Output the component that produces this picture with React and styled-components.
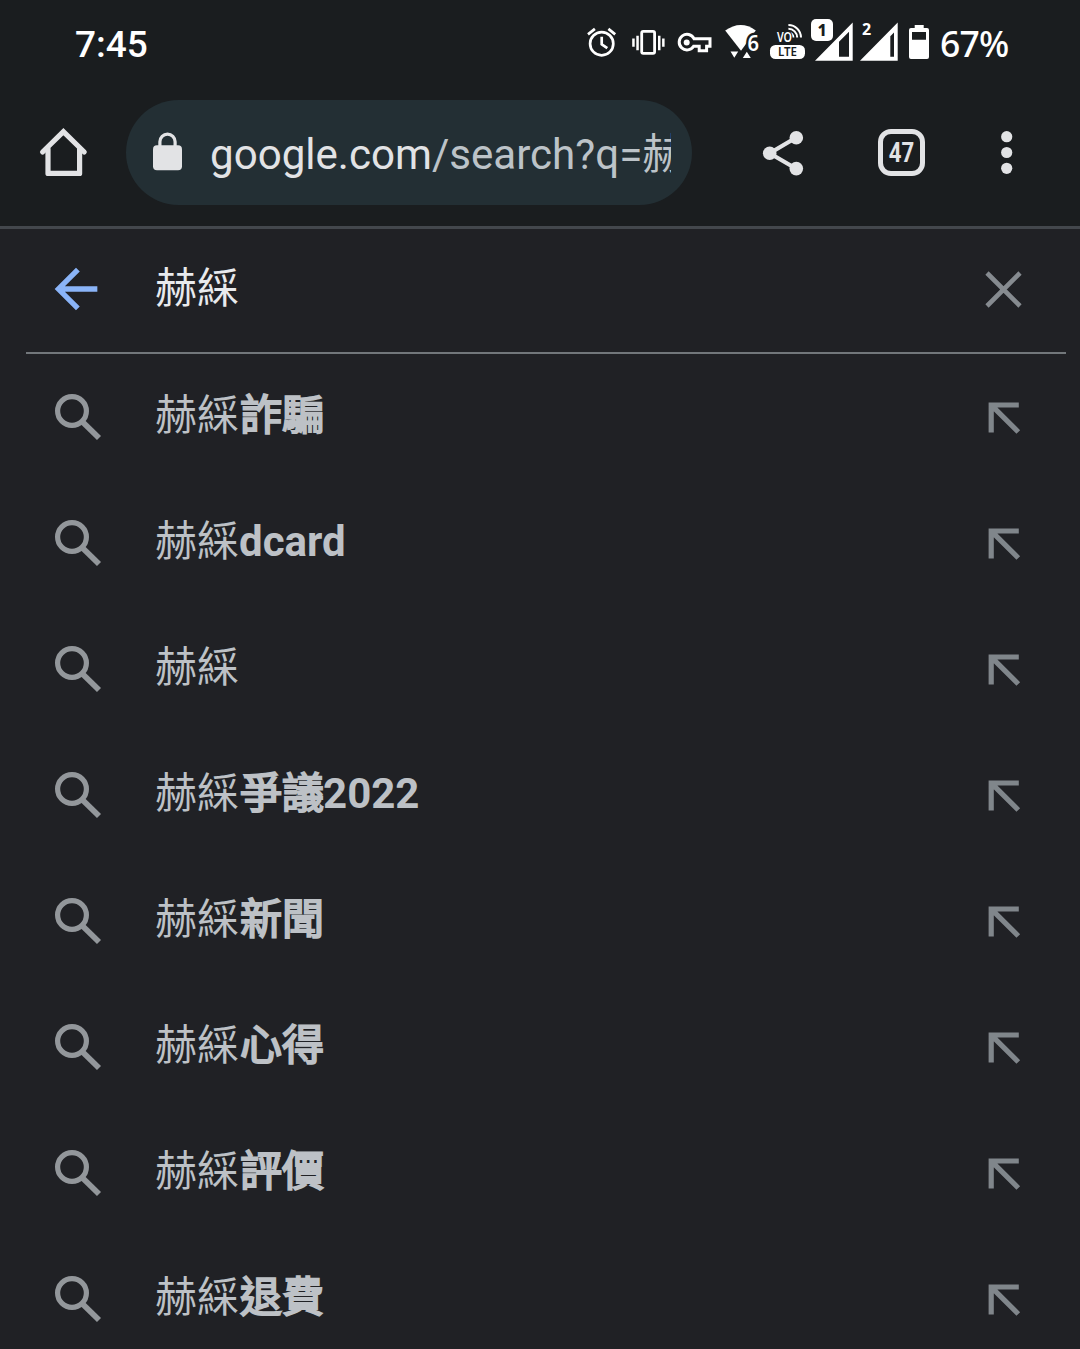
import styled, { createGlobalStyle } from 'styled-components';

const GlobalStyle = createGlobalStyle`
    * {
        box-sizing: border-box;
    }

    body {
        margin: 0;
        background: #202125;
        font-family: Roboto, 'Noto Sans CJK TC', sans-serif;
    }
`;

const Screen = styled.div`
    width: 1080px;
    height: 1349px;
    overflow: hidden;
    display: flex;
    flex-direction: column;
    background: #202125;
`;

const Header = styled.header`
    height: 229px;
    flex-shrink: 0;
    background: #1a1d1f;
    border-bottom: 3px solid #43474c;
`;

const StatusBar = styled.div`
    height: 80px;
    padding: 18px 69px 0 75px;
    display: flex;
    align-items: flex-start;
    color: #fff;
`;

const Clock = styled.div`
    margin-right: auto;
    font-size: 37px;
    font-weight: 500;
    line-height: 53px;
`;

const Battery = styled.div`
    width: 71px;
    margin-left: 11px;
    font-family: 'Noto Sans', sans-serif;
    font-size: 35.5px;
    font-weight: 500;
    line-height: 51px;
    letter-spacing: -0.8px;
`;

const StatusIcon = styled.svg`
    display: block;
    flex-shrink: 0;
    height: 44px;
    width: ${({$width}) => $width}px;
    margin-left: ${({$gap}) => $gap ?? 0}px;
    overflow: visible;
    font-family: 'Noto Sans', sans-serif;
`;

const Toolbar = styled.div`
    height: 146px;
    padding: 20px 45px 21px 36px;
    display: flex;
    align-items: center;
    color: #e2e3e5;
`;

const Icon = styled.svg`
    display: block;
    flex-shrink: 0;
    width: ${({$size}) => $size}px;
    height: ${({$size}) => $size}px;
`;

const AddressBar = styled.div`
    width: 566px;
    height: 105px;
    flex-shrink: 0;
    margin: 0 63px 0 35px;
    padding: 0 21px 0 20px;
    display: flex;
    align-items: center;
    border-radius: 53px;
    background: #232f34;
`;

const Url = styled.div`
    flex: 1;
    margin: 5px 0 0 20px;
    overflow: hidden;
    white-space: nowrap;
    font-size: 42.1px;
    line-height: 60px;
    color: #e2e3e5;

    span {
        color: #bcc3c8;
    }
`;

const TabCount = styled.div`
    width: 47px;
    height: 47px;
    flex-shrink: 0;
    margin: 0 54px 0 67px;
    display: flex;
    align-items: center;
    justify-content: center;
    border: 5px solid #e2e3e5;
    border-radius: 13px;
    font-size: 27px;
    font-weight: 700;

    span {
        transform: scaleX(0.82);
    }
`;

const SearchBox = styled.div`
    height: 125px;
    flex-shrink: 0;
    margin: 0 14px 0 26px;
    padding: 0 31px 3px 18px;
    display: flex;
    align-items: center;
    border-bottom: 2px solid #72777b;
`;

const Query = styled.div`
    flex: 1;
    margin: 0 0 1px 47px;
    font-size: 42px;
    line-height: 60px;
    color: #e8eaed;
`;

const Suggestions = styled.ul`
    margin: 0;
    padding: 0;
    list-style: none;
`;

const Suggestion = styled.li`
    height: 126px;
    padding: 0 56px 0 52px;
    display: flex;
    align-items: center;
`;

const Label = styled.div`
    flex: 1;
    margin: 0 0 2px 51px;
    font-size: 42px;
    line-height: 60px;
    color: #bdc1c6;
`;

const Bold = styled.b`
    font-weight: 700;
`;

// Han glyphs are thickened from the regular weight
const HanBold = styled.b`
    margin: 0 -1px 0 1px;
    font-weight: 400;
    -webkit-text-stroke: 2px currentColor;
`;

const suggestions = [
    {han: '詐騙'},
    {latin: 'dcard'},
    {},
    {han: '爭議', latin: '2022'},
    {han: '新聞'},
    {han: '心得'},
    {han: '評價'},
    {han: '退費'},
];

const StatusIcons = () => (
    <>
        <StatusIcon $width={31} fill="none" stroke="currentColor" strokeWidth="2.7">
            <circle cx="15.7" cy="25.7" r="11.6" />
            <path d="M15.7 18.8V26.4L21.3 30.2M2 16.4L8.9 10.9M22.4 10.9L29.2 16.4" />
        </StatusIcon>
        <StatusIcon $width={35} $gap={14} fill="currentColor">
            <rect x="10.7" y="13.4" width="12.9" height="22" rx="1.6" fill="none" stroke="currentColor" strokeWidth="2.8" />
            <path d="M5.3 17.7h2.5v14.6h-2.5zM1.2 20.4h2.5v8.4h-2.5zM27 17.7h2.5v14.6h-2.5zM31.1 20.4h2.5v8.4h-2.5z" />
        </StatusIcon>
        <StatusIcon $width={35} $gap={11} fill="none" stroke="currentColor" strokeWidth="3">
            <path d="M17 20.7H33V28.3H29.6V32.8H22.2V28.3H16.6A7.8 7.8 0 1 1 17 20.7Z" />
            <circle cx="9.7" cy="24.4" r="3" fill="currentColor" stroke="none" />
        </StatusIcon>
        <StatusIcon $width={36} $gap={12} fill="currentColor">
            <path d="M1.2 12.6Q16.5 1.5 31.8 12.4L17 32.7Z" />
            <path d="M6.5 33.5H14.2L10.3 39.8ZM18.8 40H26.8L22.8 33.7Z" />
            <text x="23.4" y="32.6" fontSize="21.5" fontWeight="600" stroke="#1a1d1f" strokeWidth="5" paintOrder="stroke" textLength="11.5" lengthAdjust="spacingAndGlyphs">6</text>
        </StatusIcon>
        <StatusIcon $width={36} $gap={10} fill="currentColor">
            <path d="M18.4 14.6A5 5 0 0 1 23.4 19.6M18.4 10.8A8.8 8.8 0 0 1 27.2 19.6M18.4 7A12.6 12.6 0 0 1 31 19.6" fill="none" stroke="currentColor" strokeWidth="2" />
            <text x="7" y="23.9" fontSize="13.5" fontWeight="600" stroke="#1a1d1f" strokeWidth="2.4" paintOrder="stroke" textLength="15" lengthAdjust="spacingAndGlyphs">VO</text>
            <rect x="0" y="27" width="35" height="14" rx="5.5" />
            <text x="8" y="38.2" fontSize="12" fontWeight="600" fill="#1a1d1f" textLength="19" lengthAdjust="spacingAndGlyphs">LTE</text>
        </StatusIcon>
        <StatusIcon $width={42} $gap={5} fill="currentColor">
            <path fillRule="evenodd" d="M4 42.7L41.7 4.5V42.7ZM28 23.8V38.7H38V13.8Z" />
            <rect x="0" y="1" width="22" height="22" rx="5" />
            <text x="11" y="17.8" textAnchor="middle" fontSize="16" fontWeight="800" fill="#1a1d1f">1</text>
        </StatusIcon>
        <StatusIcon $width={38} $gap={7} fill="currentColor">
            <path fillRule="evenodd" d="M0 42.7L37.7 4.5V42.7ZM30.3 18.3V38.7H34V14.5Z" />
            <text x="2" y="17.2" fontSize="16" fontWeight="700">2</text>
        </StatusIcon>
        <StatusIcon $width={20} $gap={11} fill="currentColor">
            <path fillRule="evenodd" d="M5.7 7h9v3H18a2 2 0 0 1 2 2V39a2 2 0 0 1-2 2H2a2 2 0 0 1-2-2V12a2 2 0 0 1 2-2H5.7ZM3 14V21.7H17V14Z" />
        </StatusIcon>
    </>
);

const HomeIcon = () => (
    <Icon $size={55} viewBox="0 0 55 55" fill="none" stroke="currentColor" strokeWidth="5.2" strokeLinecap="round" strokeLinejoin="round">
        <path d="M6.6 27L27.4 6.6L48.2 27" strokeLinejoin="miter" />
        <path d="M12 24V48.4H43.6V24" />
    </Icon>
);

const LockIcon = () => (
    <Icon $size={44} viewBox="0 0 44 44">
        <rect x="7" y="14.3" width="29" height="25" rx="4" fill="currentColor" />
        <path d="M13.9 16V10.8a7.6 7.6 0 0 1 15.2 0V16" fill="none" stroke="currentColor" strokeWidth="3.2" />
    </Icon>
);

const ShareIcon = () => (
    <Icon $size={56} viewBox="0 0 56 56" fill="currentColor">
        <path d="M41.3 12.5L14.7 28.3L41.3 43.7" fill="none" stroke="currentColor" strokeWidth="4.2" />
        <circle cx="14.7" cy="28.3" r="6.8" />
        <circle cx="41.3" cy="12.7" r="6.8" />
        <circle cx="41.3" cy="43.6" r="6.8" />
    </Icon>
);

const MenuIcon = () => (
    <Icon $size={56} viewBox="0 0 56 56" fill="currentColor">
        <circle cx="27.7" cy="11.7" r="5.6" />
        <circle cx="27.7" cy="27.5" r="5.6" />
        <circle cx="27.7" cy="43.3" r="5.6" />
    </Icon>
);

const BackIcon = () => (
    <Icon $size={64} viewBox="0 0 24 24" fill="#8ab4f8">
        <path d="M20 11H7.83l5.59-5.59L12 4l-8 8 8 8 1.41-1.41L7.83 13H20v-2z" />
    </Icon>
);

const ClearIcon = () => (
    <Icon $size={63} viewBox="0 0 63 63" fill="none" stroke="#868b90" strokeWidth="4.6">
        <path d="M15 15L48 48M48 15L15 48" />
    </Icon>
);

const SearchIcon = () => (
    <Icon $size={52} viewBox="0 0 52 52" fill="none" stroke="#93979b">
        <circle cx="20" cy="20" r="14.4" strokeWidth="5.2" />
        <path d="M30.6 31L47 47" strokeWidth="5.8" />
    </Icon>
);

const InsertIcon = () => (
    <Icon $size={40} viewBox="0 0 40 40" fill="none" stroke="#80868b" strokeWidth="5.2">
        <path d="M7.2 35.6V8H34.8M7.3 8.2L34.3 35" />
    </Icon>
);

export default function App() {
    return (
        <Screen>
            <GlobalStyle />
            <Header>
                <StatusBar>
                    <Clock>7:45</Clock>
                    <StatusIcons />
                    <Battery>67%</Battery>
                </StatusBar>
                <Toolbar>
                    <HomeIcon />
                    <AddressBar>
                        <LockIcon />
                        <Url>google.com<span>/search?q=赫綵</span></Url>
                    </AddressBar>
                    <ShareIcon />
                    <TabCount><span>47</span></TabCount>
                    <MenuIcon />
                </Toolbar>
            </Header>
            <SearchBox>
                <BackIcon />
                <Query>赫綵</Query>
                <ClearIcon />
            </SearchBox>
            <Suggestions>
                {suggestions.map(({han, latin}, index) => (
                    <Suggestion key={index}>
                        <SearchIcon />
                        <Label>
                            赫綵
                            {han && <HanBold>{han}</HanBold>}
                            {latin && <Bold>{latin}</Bold>}
                        </Label>
                        <InsertIcon />
                    </Suggestion>
                ))}
            </Suggestions>
        </Screen>
    );
}
